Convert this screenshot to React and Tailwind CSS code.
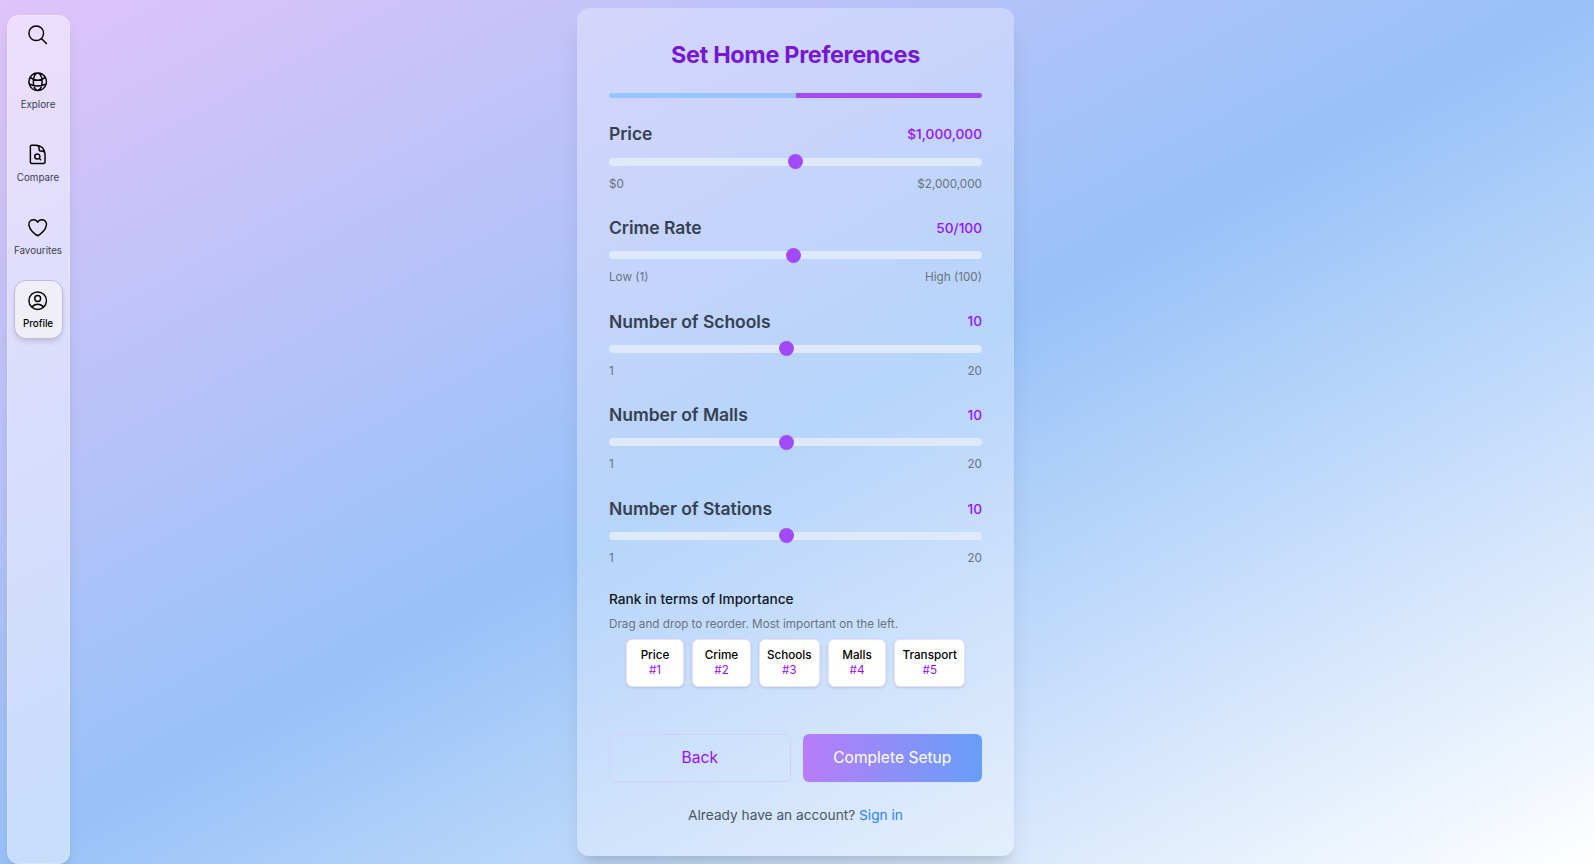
import {
  HiOutlineMagnifyingGlass,
  HiOutlineGlobeAlt,
  HiOutlineDocumentMagnifyingGlass,
  HiOutlineHeart,
  HiOutlineUserCircle,
} from 'react-icons/hi2';

const nav = [
  { Icon: HiOutlineGlobeAlt, label: 'Explore' },
  { Icon: HiOutlineDocumentMagnifyingGlass, label: 'Compare' },
  { Icon: HiOutlineHeart, label: 'Favourites' },
  { Icon: HiOutlineUserCircle, label: 'Profile', active: true },
];

const sliders = [
  { label: 'Price', value: '$1,000,000', min: '$0', max: '$2,000,000', at: 0.5 },
  { label: 'Crime Rate', value: '50/100', min: 'Low (1)', max: 'High (100)', at: 49 / 99 },
  { label: 'Number of Schools', value: '10', min: '1', max: '20', at: 9 / 19 },
  { label: 'Number of Malls', value: '10', min: '1', max: '20', at: 9 / 19 },
  { label: 'Number of Stations', value: '10', min: '1', max: '20', at: 9 / 19 },
];

const ranks = [
  { name: 'Price', width: 'w-[58.5px]' },
  { name: 'Crime', width: 'w-[58.5px]' },
  { name: 'Schools', width: 'w-[61px]' },
  { name: 'Malls', width: 'w-[58.5px]' },
  { name: 'Transport', width: 'w-[71px]' },
];

function Sidebar() {
  return (
    <nav className="mt-[15px] ml-[6.5px] flex h-[849px] w-[63px] shrink-0 flex-col items-center rounded-[12px] border border-white/20 bg-white/45 shadow-lg">
      <HiOutlineMagnifyingGlass className="mt-[7px] h-[23.4px] w-[23.4px] shrink-0 text-black" />
      <div className="mt-[15px] flex flex-col gap-[14px]">
        {nav.map(({ Icon, label, active }) => (
          <a
            key={label}
            className={
              active
                ? 'flex h-[59px] w-[49px] flex-col items-center rounded-[12px] border border-[#c0bbdb] bg-[#f0eff8] pt-[8px] text-black shadow-md'
                : 'flex h-[59px] w-[49px] flex-col items-center pt-[9px] text-black'
            }
          >
            <Icon className="h-[23.4px] w-[23.4px] shrink-0" />
            <span
              className={
                active
                  ? 'mt-[4.6px] text-[9.8px] leading-[14px] font-medium'
                  : 'mt-[4.6px] text-[9.8px] leading-[14px] text-gray-700'
              }
            >
              {label}
            </span>
          </a>
        ))}
      </div>
    </nav>
  );
}

function Slider({ label, value, min, max, at }) {
  return (
    <div className="h-[93.6px]">
      <div className="flex h-[27px] items-center justify-between">
        <span className="text-[17.55px] font-semibold tracking-[-0.05px] text-gray-700">{label}</span>
        <span className="text-[13.7px] font-medium text-purple-600">{value}</span>
      </div>
      <div className="mt-[9.5px] flex h-[8px] items-center rounded-full bg-[#deeafb]">
        <div
          className="h-[15px] w-[15px] rounded-full bg-[#a34af8]"
          style={{ marginLeft: `calc((100% - 15px) * ${at})` }}
        />
      </div>
      <div className="mt-[10px] flex justify-between text-[11.7px] leading-[16px] text-gray-500">
        <span>{min}</span>
        <span>{max}</span>
      </div>
    </div>
  );
}

export default function App() {
  return (
    <div className="flex h-[864px] w-[1594px] overflow-hidden bg-[linear-gradient(to_bottom_right,#dfc3fa,#98c2f8,#ffffff)] font-['Inter',sans-serif]">
      <Sidebar />
      <main className="mt-[8px] ml-[507.5px] h-[848px] w-[437px] rounded-[12px] bg-white/30 px-[32px] shadow-xl">
        <h1 className="mt-[31px] text-center text-[23.4px] leading-[32px] font-bold tracking-[-0.3px] text-[#7717d3]">
          Set Home Preferences
        </h1>
        <div className="mt-[22px] flex h-[5px] overflow-hidden rounded-full">
          <div className="flex-1 bg-[#96c5ff]" />
          <div className="flex-1 bg-[#a34af8]" />
        </div>
        <div className="mt-[23px]">
          {sliders.map((s) => (
            <Slider key={s.label} {...s} />
          ))}
        </div>
        <h2 className="text-[13.7px] leading-[20px] font-medium text-gray-900">Rank in terms of Importance</h2>
        <p className="mt-[7px] text-[11.7px] leading-[16px] text-gray-500">
          Drag and drop to reorder. Most important on the left.
        </p>
        <div className="mt-[7px] flex justify-center gap-[8px]">
          {ranks.map((r, i) => (
            <div
              key={r.name}
              className={`${r.width} flex h-[48px] flex-col items-center justify-center rounded-[6px] border border-[#ebdffc] bg-white pt-px text-[11.7px] leading-[15.6px] shadow-sm`}
            >
              <span className="font-medium text-black">{r.name}</span>
              <span className="text-purple-600">#{i + 1}</span>
            </div>
          ))}
        </div>
        <div className="mt-[47px] flex gap-[12px]">
          <button className="h-[48px] w-[181.5px] rounded-[6px] border border-[#d8cdfa] text-[15.6px] text-purple-600">
            Back
          </button>
          <button className="h-[48px] flex-1 rounded-[6px] bg-[linear-gradient(to_right,#b87df8,#669ff8)] text-[15.6px] text-white">
            Complete Setup
          </button>
        </div>
        <p className="mt-[23px] text-center text-[13.7px] leading-[20px] text-gray-600">
          Already have an account? <a className="text-blue-500">Sign in</a>
        </p>
      </main>
    </div>
  );
}
